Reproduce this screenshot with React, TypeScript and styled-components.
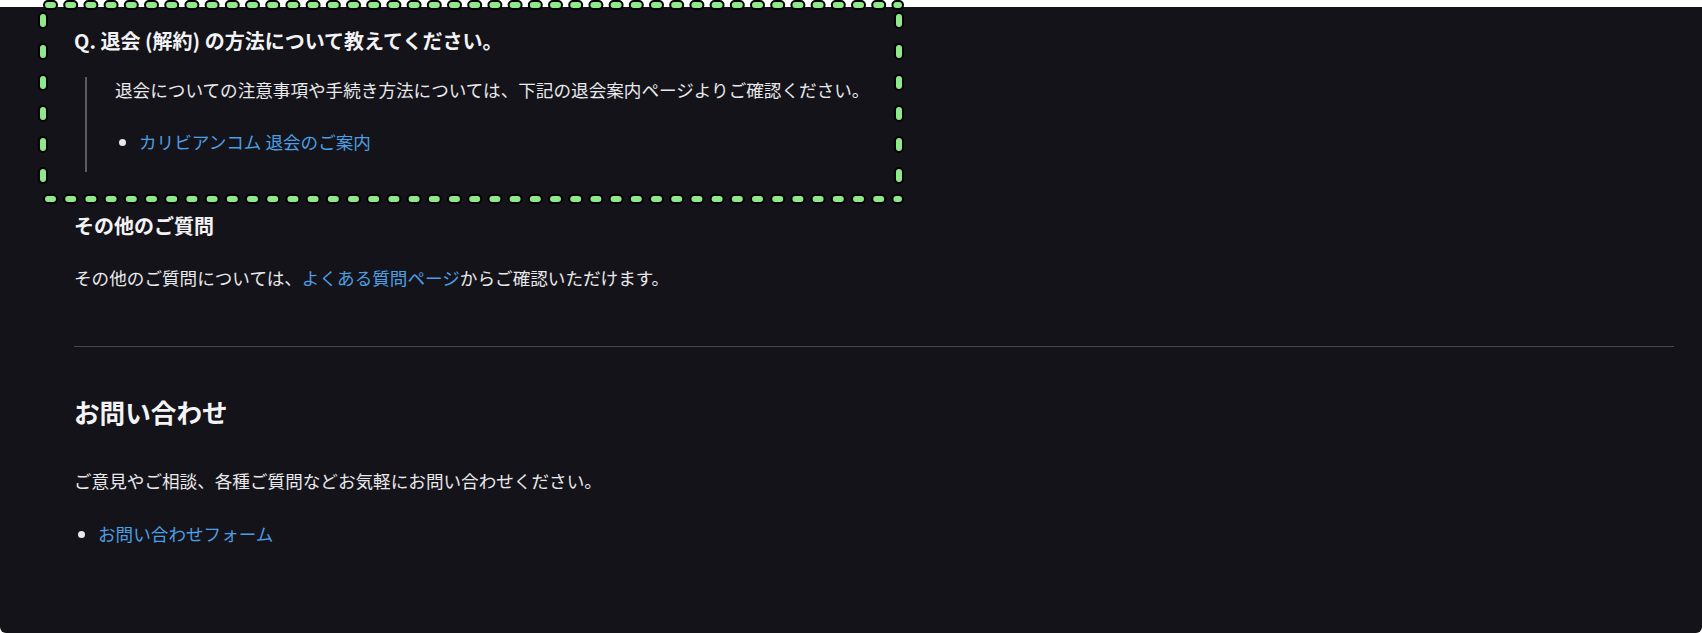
import React from "react";
import styled, { createGlobalStyle } from "styled-components";

const GlobalStyle = createGlobalStyle`
  html, body {
    margin: 0;
    padding: 0;
    background: #ffffff;
  }
  body {
    font-family: "Noto Sans CJK JP", "Noto Sans", sans-serif;
  }
`;

const Panel = styled.main`
  box-sizing: border-box;
  margin-top: 7px;
  min-height: 626px;
  background: #141319;
  color: #e9e9ec;
  padding: 19px 28px 0 74px;
  border-radius: 0 0 6px 6px;
`;

const FaqItem = styled.section`
  position: relative;
`;

const Question = styled.h4<{ $gap?: number }>`
  margin: ${(p) => p.$gap ?? 0}px 0 0;
  font-size: 20px;
  line-height: 30px;
  font-weight: 700;
  color: #f3f3f5;
`;

const Answer = styled.blockquote`
  margin: 21px 0 0 11px;
  border-left: 2px solid #5c5b61;
  padding: 0 0 17px 28px;
`;

const Text = styled.p<{ $gap?: number }>`
  margin: ${(p) => p.$gap ?? 0}px 0 0;
  font-size: 17.6px;
  line-height: 26px;
`;

const LinkList = styled.ul<{ $gap: number }>`
  margin: ${(p) => p.$gap}px 0 0;
  padding-left: 24px;
  font-size: 17.6px;
  line-height: 26px;
`;

const Link = styled.a`
  color: #4c9fe2;
  text-decoration: none;
`;

const Divider = styled.hr`
  margin: 55px 0 0;
  border: 0;
  border-top: 1px solid #48474d;
  height: 0;
`;

const SectionTitle = styled.h3`
  margin: 47px 0 0;
  font-size: 25.6px;
  line-height: 36px;
  font-weight: 700;
  color: #f3f3f5;
`;

const Highlight = styled.svg`
  position: absolute;
  left: -31px;
  top: -21px;
  width: 856px;
  height: 194px;
  overflow: visible;
  pointer-events: none;
`;

const HighlightFrame: React.FC = () => {
  const w = 856;
  const h = 194;
  const lines = [
    { x1: 5, y1: 0, x2: w, y2: 0, d: "5 15.2" },
    { x1: 5, y1: h, x2: w, y2: h, d: "5 15.2" },
    { x1: 0, y1: 12, x2: 0, y2: h, d: "7 24" },
    { x1: w, y1: 12, x2: w, y2: h, d: "7 24" },
  ];
  return (
    <Highlight viewBox={`0 0 ${w} ${h}`}>
      {lines.map((l, i) => (
        <line
          key={`b${i}`}
          {...l}
          stroke="#000"
          strokeWidth={10}
          strokeLinecap="round"
          strokeDasharray={l.d}
        />
      ))}
      {lines.map((l, i) => (
        <line
          key={`g${i}`}
          {...l}
          stroke="#8fe98a"
          strokeWidth={6}
          strokeLinecap="round"
          strokeDasharray={l.d}
        />
      ))}
    </Highlight>
  );
};

export default function App() {
  return (
    <>
      <GlobalStyle />
      <Panel>
        <FaqItem>
          <Question>Q. 退会 (解約) の方法について教えてください。</Question>
          <Answer>
            <Text>
              退会についての注意事項や手続き方法については、下記の退会案内ページよりご確認ください。
            </Text>
            <LinkList $gap={26}>
              <li>
                <Link href="#">カリビアンコム 退会のご案内</Link>
              </li>
            </LinkList>
          </Answer>
          <HighlightFrame />
        </FaqItem>

        <Question $gap={39}>その他のご質問</Question>
        <Text $gap={24}>
          その他のご質問については、<Link href="#">よくある質問ページ</Link>
          からご確認いただけます。
        </Text>

        <Divider />

        <SectionTitle>お問い合わせ</SectionTitle>
        <Text $gap={38}>ご意見やご相談、各種ご質問などお気軽にお問い合わせください。</Text>
        <LinkList $gap={27}>
          <li>
            <Link href="#">お問い合わせフォーム</Link>
          </li>
        </LinkList>
      </Panel>
    </>
  );
}
